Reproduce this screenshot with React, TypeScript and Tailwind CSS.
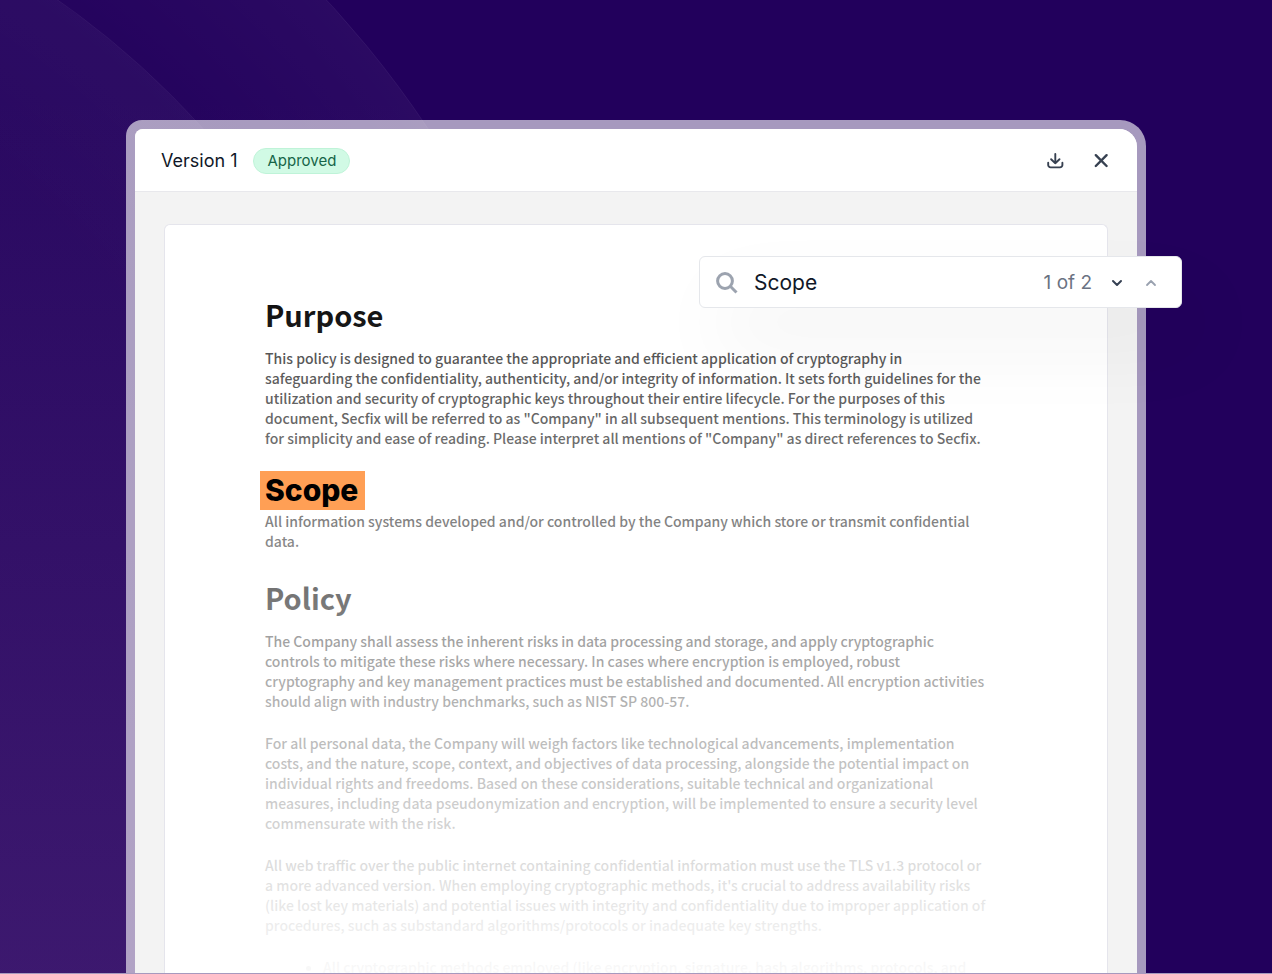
import React, {useState} from "react";

const matches = ['scope-heading', 'scope-text'];

export default function App() {
  const [query, setQuery] = useState('Scope');
  const [current, setCurrent] = useState(1);

  return (
    <main className="relative flex h-screen flex-col overflow-hidden border-b border-white/60 bg-[#22005c] px-[126px] pt-[120px] font-['Inter',sans-serif]">
      <Backdrop/>
      <div className="relative flex min-h-0 flex-1 flex-col rounded-tl-[16px] rounded-tr-[26px] bg-white/60 px-[9px] pt-[9px]">
        <div className="flex min-h-0 flex-1 flex-col overflow-hidden rounded-tl-[8px] rounded-tr-[18px] bg-[#f3f3f3]">
          <DocumentHeader/>
          <div className="flex min-h-0 flex-1 flex-col px-[29px] pt-8">
            <PolicyDocument/>
          </div>
        </div>
        <SearchBar
          query={query}
          setQuery={setQuery}
          current={current}
          total={matches.length}
          handleNext={() => setCurrent(Math.min(current + 1, matches.length))}
          handlePrevious={() => setCurrent(Math.max(current - 1, 1))}
        />
      </div>
    </main>
  );
}

const Backdrop = () => {
  return (
    <svg className="absolute top-0 left-0" width="1272" height="974" aria-hidden="true">
      <defs>
        <radialGradient id="outer" gradientUnits="userSpaceOnUse" cx="-441" cy="709" r="1045">
          <stop offset="0.84" stopColor="#fff" stopOpacity="0.015"/>
          <stop offset="1" stopColor="#fff" stopOpacity="0.04"/>
        </radialGradient>
        <radialGradient id="inner" gradientUnits="userSpaceOnUse" cx="-441" cy="709" r="867">
          <stop offset="0.8" stopColor="#fff" stopOpacity="0.02"/>
          <stop offset="1" stopColor="#fff" stopOpacity="0.035"/>
        </radialGradient>
        <linearGradient id="glow" x1="0" y1="0" x2="0" y2="1">
          <stop offset="0.1" stopColor="#7a4a9a" stopOpacity="0"/>
          <stop offset="1" stopColor="#7a4a9a" stopOpacity="0.24"/>
        </linearGradient>
      </defs>
      <circle cx="-441" cy="709" r="1045" fill="url(#outer)" stroke="#fff" strokeOpacity="0.05"/>
      <circle cx="-441" cy="709" r="867" fill="url(#inner)" stroke="#fff" strokeOpacity="0.04"/>
      <rect width="400" height="974" fill="url(#glow)"/>
    </svg>
  )
}

const DocumentHeader = () => {
  return (
    <header className="flex h-[63px] shrink-0 items-center justify-between border-b border-[#e8e8ec] bg-white pt-px pr-[27px] pl-[26px]">
      <div className="flex items-center gap-4">
        <h1 className="text-[18px] leading-6 text-gray-900">Version 1</h1>
        <span className="rounded-full border border-[#bff3d8] bg-[#d1fae5] px-[13px] text-[15px] leading-6 text-[#166548]">Approved</span>
      </div>
      <div className="flex items-center gap-7">
        <button type="button" aria-label="Download" className="cursor-pointer">
          <svg width="18" height="18" viewBox="0 0 18 18" fill="none" stroke="#374151" strokeWidth="1.9" strokeLinecap="round" strokeLinejoin="round">
            <path d="M9.3 2v9.2M5.1 7.2l4.2 4 4.2-4M2.2 10.8v2.2a2.4 2.4 0 0 0 2.4 2.4h9.4a2.4 2.4 0 0 0 2.4-2.4v-2.2"/>
          </svg>
        </button>
        <button type="button" aria-label="Close" className="cursor-pointer">
          <svg width="18" height="18" viewBox="0 0 18 18" fill="none" stroke="#374151" strokeWidth="2.4" strokeLinecap="round">
            <path d="M3.8 3.2l10.8 10.8M14.6 3.2l-10.8 10.8"/>
          </svg>
        </button>
      </div>
    </header>
  )
}

type SearchBarProps = {
  query: string
  setQuery: (value: string) => void
  current: number
  total: number
  handleNext: () => void
  handlePrevious: () => void
}

const SearchBar = ({query, setQuery, current, total, handleNext, handlePrevious}: SearchBarProps) => {
  const nextStyle = current < total ? 'text-gray-700' : 'text-gray-400'
  const previousStyle = current > 1 ? 'text-gray-700' : 'text-gray-400'

  return (
    <div className="absolute top-[136px] -right-9 flex h-[52px] w-[483px] items-center rounded-md border border-gray-200 bg-white pt-px pr-[21px] pl-4 shadow-[20px_40px_80px_rgba(0,0,0,0.05)]">
      <svg width="22" height="22" viewBox="0 0 22 22" fill="none" stroke="#9ca3af" strokeWidth="3" aria-hidden="true">
        <circle cx="9" cy="9" r="7.4"/>
        <path d="M14.3 14.3l6.2 6.2"/>
      </svg>
      <input
        aria-label="Search in document"
        className="ml-4 min-w-0 flex-1 text-[21px] leading-7 text-gray-900 outline-none"
        onChange={(e) => setQuery(e.target.value)}
        value={query}
      />
      <span className="text-[19px] leading-7 text-gray-500">{current} of {total}</span>
      <button type="button" aria-label="Next match" onClick={handleNext} className={`ml-4 cursor-pointer ${nextStyle}`}>
        <svg width="18" height="18" viewBox="0 0 18 18" fill="none" stroke="currentColor" strokeWidth="2" strokeLinecap="round" strokeLinejoin="round">
          <path d="M5 7l4 4 4-4"/>
        </svg>
      </button>
      <button type="button" aria-label="Previous match" onClick={handlePrevious} className={`ml-4 cursor-pointer ${previousStyle}`}>
        <svg width="18" height="18" viewBox="0 0 18 18" fill="none" stroke="currentColor" strokeWidth="1.8" strokeLinecap="round" strokeLinejoin="round">
          <path d="M5 11l4-4 4 4"/>
        </svg>
      </button>
    </div>
  )
}

const PolicyDocument = () => {
  return (
    <article className="relative min-h-0 flex-1 overflow-hidden rounded-t-md border border-b-0 border-[#e5e5ec] bg-white pt-[67px] pr-[120px] pl-[100px] font-['Noto_Sans_CJK_SC',sans-serif] text-[14px] leading-5 font-medium text-[#3c3c3c]">
      <h2 className="mb-3 text-[29px] leading-11 font-bold text-black">Purpose</h2>
      <p>
        This policy is designed to guarantee the appropriate and efficient application of cryptography in
        safeguarding the confidentiality, authenticity, and/or integrity of information. It sets forth guidelines for the
        utilization and security of cryptographic keys throughout their entire lifecycle. For the purposes of this
        document, Secfix will be referred to as "Company" in all subsequent mentions. This terminology is utilized
        for simplicity and ease of reading. Please interpret all mentions of "Company" as direct references to Secfix.
      </p>
      <h2 className="mt-[21px] mb-px text-[30px] leading-[39px] font-bold text-black">
        <mark className="relative z-10 -ml-[5px] inline-block bg-[#ff9f55] pr-[7px] pl-[5px] font-['Inter',sans-serif] font-extrabold text-black">Scope</mark>
      </h2>
      <p>
        All information systems developed and/or controlled by the Company which store or transmit confidential
        data.
      </p>
      <h2 className="mt-6 mb-3 text-[29px] leading-11 font-bold text-black">Policy</h2>
      <p className="mb-[22px]">
        The Company shall assess the inherent risks in data processing and storage, and apply cryptographic
        controls to mitigate these risks where necessary. In cases where encryption is employed, robust
        cryptography and key management practices must be established and documented. All encryption activities
        should align with industry benchmarks, such as NIST SP 800-57.
      </p>
      <p className="mb-[22px]">
        For all personal data, the Company will weigh factors like technological advancements, implementation
        costs, and the nature, scope, context, and objectives of data processing, alongside the potential impact on
        individual rights and freedoms. Based on these considerations, suitable technical and organizational
        measures, including data pseudonymization and encryption, will be implemented to ensure a security level
        commensurate with the risk.
      </p>
      <p className="mb-[22px]">
        All web traffic over the public internet containing confidential information must use the TLS v1.3 protocol or
        a more advanced version. When employing cryptographic methods, it's crucial to address availability risks
        (like lost key materials) and potential issues with integrity and confidentiality due to improper application of
        procedures, such as substandard algorithms/protocols or inadequate key strengths.
      </p>
      <ul className="list-disc pl-[58px] whitespace-nowrap">
        <li>All cryptographic methods employed (like encryption, signature, hash algorithms, protocols, and</li>
      </ul>
      <div className="pointer-events-none absolute inset-0 bg-linear-to-b from-white/0 from-4% to-white/97"/>
    </article>
  )
}
